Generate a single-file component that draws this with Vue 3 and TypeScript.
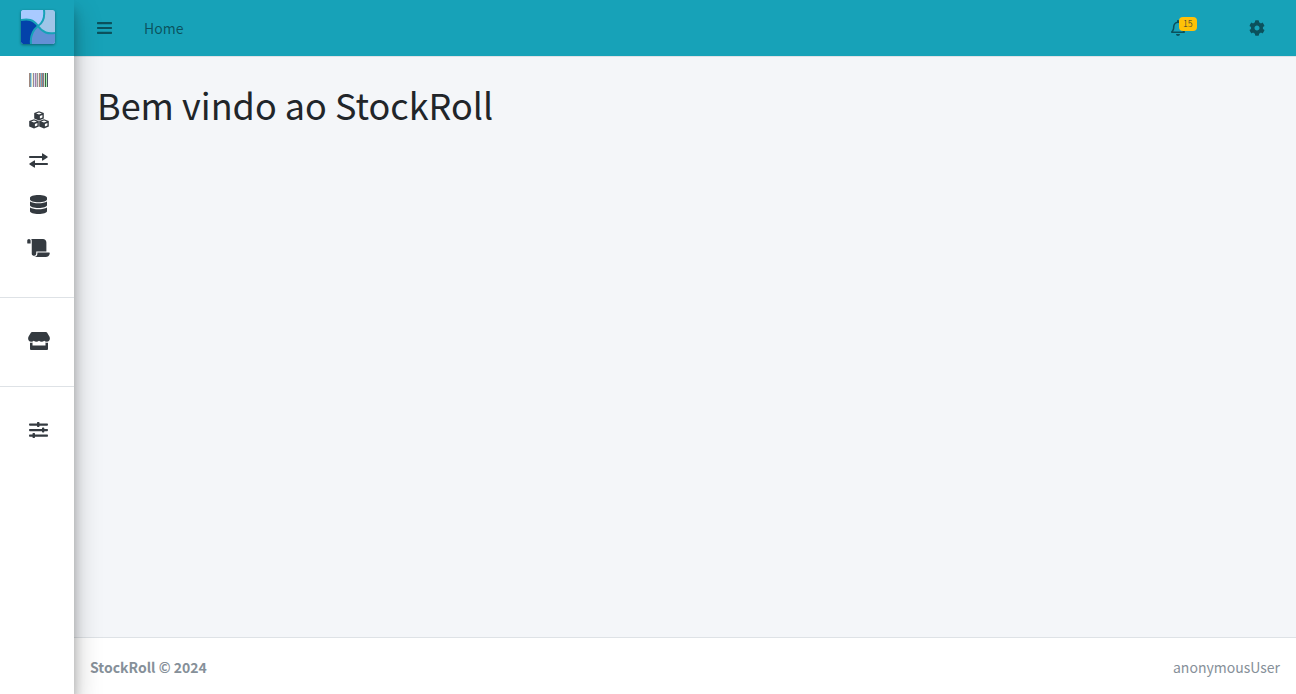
<script setup lang="ts">
interface Item {
  id: string
  label: string
}

const groups: Item[][] = [
  [
    { id: 'barcode', label: 'Produtos' },
    { id: 'cubes', label: 'Estoque' },
    { id: 'exchange', label: 'Movimentações' },
    { id: 'database', label: 'Cadastros' },
    { id: 'scroll', label: 'Relatórios' },
  ],
  [{ id: 'store', label: 'Loja' }],
  [{ id: 'sliders', label: 'Configurações' }],
]

const stripes = [
  '#a0887e', '#6f9bb0', '#a8dcf0', '#f6f2c8', '#8f8aa0', '#dcdff2', '#a083a8',
  '#d5c0d2', '#8fa09a', '#f0e6e0', '#a98078', '#7fb4c4', '#b58a86', '#6b8fa6',
  '#9a6f74', '#c8e4d8', '#35683c', '#b0f0b4', '#4a5568',
]
</script>

<template>
  <div class="layout">
    <aside class="sidebar">
      <a class="brand" href="#" aria-label="StockRoll">
        <svg class="logo" viewBox="0 0 34 34" aria-hidden="true">
          <defs><clipPath id="logoClip"><rect width="34" height="34" rx="2" /></clipPath></defs>
          <g clip-path="url(#logoClip)">
            <rect width="34" height="34" fill="#9fc5e8" />
            <path d="M0 0H23C24 8 22 13 17 16C12 9 7 9 0 10Z" fill="#a9caff" />
            <path d="M0 10C7 9 12 9 17 16C11 21 9 26 10 34H0Z" fill="#0342aa" />
            <path d="M10 34C9 26 11 21 17 16C22 23 27 24 34 23V34Z" fill="#6390d5" />
            <path d="M23 0C24 8 22 13 17 16C11 21 9 26 10 34M0 10C7 9 12 9 17 16C22 23 27 24 34 23" fill="none" stroke="#17a2b8" stroke-width="2" />
          </g>
        </svg>
      </a>
      <nav>
        <ul v-for="(group, g) in groups" :key="g" class="group">
          <li v-for="item in group" :key="item.id">
            <a href="#" :class="['side-link', item.id]" :aria-label="item.label">
              <svg v-if="item.id === 'barcode'" class="icon" width="19" height="14" viewBox="0 0 19 14" shape-rendering="crispEdges" aria-hidden="true">
                <rect v-for="(color, i) in stripes" :key="i" :x="i" y="0" width="1" height="14" :fill="color" />
              </svg>
              <svg v-else-if="item.id === 'cubes'" class="icon" width="20" height="18" viewBox="0 0 20 18" aria-hidden="true">
                <g v-for="p in [[5, 0], [0, 8], [10, 8]]" :key="p[0]" :transform="`translate(${p[0]} ${p[1]})`">
                  <path d="M5 .3L9.8 2V7.4L5 9.6.2 7.4V2Z" />
                  <path d="M5 1.4L7.9 2.5 5 3.6 2.1 2.5ZM5.9 5L8.4 4V6.4L5.9 7.6Z" fill="#fff" />
                </g>
              </svg>
              <svg v-else-if="item.id === 'exchange'" class="icon" width="19" height="15" viewBox="0 0 19 15" aria-hidden="true">
                <path d="M.8 3H13V.8Q13 0 13.8.4L18.5 3.6Q19 4 18.5 4.5L13.8 7.6Q13 8 13 7.1V5H.8Q0 5 0 4Q0 3 .8 3ZM18.2 10H6V7.8Q6 7 5.2 7.4L.5 10.6Q0 11 .5 11.5L5.2 14.6Q6 15 6 14.1V12H18.2Q19 12 19 11Q19 10 18.2 10Z" />
              </svg>
              <svg v-else-if="item.id === 'database'" class="icon" width="17" height="19" viewBox="0 0 448 512" preserveAspectRatio="none" aria-hidden="true">
                <path d="M448 73.143v45.714C448 159.143 347.667 192 224 192S0 159.143 0 118.857V73.143C0 32.857 100.333 0 224 0s224 32.857 224 73.143zM448 176v102.857C448 319.143 347.667 352 224 352S0 319.143 0 278.857V176c48.125 33.143 136.208 48.572 224 48.572S399.874 209.143 448 176zm0 160v102.857C448 479.143 347.667 512 224 512S0 479.143 0 438.857V336c48.125 33.143 136.208 48.572 224 48.572S399.874 369.143 448 336z" />
              </svg>
              <svg v-else-if="item.id === 'scroll'" class="icon" width="23" height="18" viewBox="0 0 640 512" aria-hidden="true">
                <path d="M48 0C21.53 0 0 21.53 0 48v64c0 8.84 7.16 16 16 16h80V48C96 21.53 74.47 0 48 0zm208 412.57V352h288V96c0-52.94-43.06-96-96-96H111.59C121.74 13.41 128 29.92 128 48v368c0 38.87 34.65 69.65 74.75 63.12C234.22 474 256 444.46 256 412.57zM288 384v32c0 52.93-43.06 96-96 96h336c61.86 0 112-50.14 112-112 0-8.84-7.16-16-16-16H288z" />
              </svg>
              <svg v-else-if="item.id === 'store'" class="icon" width="22" height="18" viewBox="0 0 22 18" aria-hidden="true">
                <path d="M4 0H18Q18.6 0 19 .6L21.4 4.5C22.6 6.8 21.5 9.8 18.8 9.8Q17.1 9.8 16.2 8.7Q15.2 9.8 13.6 9.8Q12 9.8 11 8.7Q10 9.8 8.4 9.8Q6.8 9.8 5.8 8.7Q4.9 9.8 3.2 9.8C.5 9.8-.6 6.8.6 4.5L3 .6Q3.4 0 4 0Z" />
                <path d="M2 10.7Q3.2 11 4.5 10.6V13.5H17.5V10.6Q18.8 11 20 10.7V17Q20 18 19 18H3Q2 18 2 17Z" />
              </svg>
              <svg v-else class="icon" width="19" height="16" viewBox="0 0 19 16" aria-hidden="true">
                <path d="M.7 1.5H8V.7Q8 0 8.7 0H9.8Q10.5 0 10.5.7V1.5H18.3Q19 1.5 19 2.6Q19 3.7 18.3 3.7H10.5V4.3Q10.5 5 9.8 5H8.7Q8 5 8 4.3V3.7H.7Q0 3.7 0 2.6Q0 1.5.7 1.5ZM.7 7H13V6.2Q13 5.5 13.7 5.5H14.6Q15.3 5.5 15.3 6.2V7H18.3Q19 7 19 8.1Q19 9.2 18.3 9.2H15.3V9.8Q15.3 10.5 14.6 10.5H13.7Q13 10.5 13 9.8V9.2H.7Q0 9.2 0 8.1Q0 7 .7 7ZM.7 12.6H3.5V11.7Q3.5 11 4.2 11H5.3Q6 11 6 11.7V12.6H18.3Q19 12.6 19 13.7Q19 14.8 18.3 14.8H6V15.3Q6 16 5.3 16H4.2Q3.5 16 3.5 15.3V14.8H.7Q0 14.8 0 13.7Q0 12.6.7 12.6Z" />
              </svg>
            </a>
          </li>
        </ul>
      </nav>
    </aside>

    <div class="main">
      <header class="navbar">
        <button type="button" class="nav-item" aria-label="Menu">
          <svg width="15" height="12" viewBox="0 0 15 12" aria-hidden="true">
            <path d="M.5 0H14.5L15 .5V1.8L14.5 2.3H.5L0 1.8V.5ZM.5 4.9H14.5L15 5.4V6.6L14.5 7.1H.5L0 6.6V5.4ZM.5 9.7H14.5L15 10.2V11.5L14.5 12H.5L0 11.5V10.2Z" />
          </svg>
        </button>
        <a href="#" class="nav-item">Home</a>
        <div class="nav-right">
          <button type="button" class="nav-item bell" aria-label="Notificações">
            <svg width="14" height="16" viewBox="0 0 448 512" aria-hidden="true">
              <path d="M439.39 362.29c-19.32-20.76-55.47-51.99-55.47-154.29 0-77.7-54.48-139.9-127.94-155.16V32c0-17.67-14.32-32-31.98-32s-31.98 14.33-31.98 32v20.84C118.56 68.1 64.08 130.3 64.08 208c0 102.3-36.15 133.53-55.47 154.29-6 6.45-8.66 14.16-8.61 21.71.11 16.4 12.98 32 32.1 32h383.8c19.12 0 32-15.6 32.1-32 .05-7.55-2.61-15.27-8.61-21.71zM67.53 368c21.22-27.97 44.42-74.33 44.53-159.42 0-.2-.06-.38-.06-.58 0-61.86 50.14-112 112-112s112 50.14 112 112c0 .2-.06.38-.06.58.11 85.1 23.31 131.46 44.53 159.42H67.53zM224 512c35.32 0 63.97-28.65 63.97-64H160.03c0 35.35 28.65 64 63.97 64z" />
            </svg>
            <span class="badge">15</span>
          </button>
          <button type="button" class="nav-item" aria-label="Opções">
            <svg width="16" height="16" viewBox="0 0 512 512" aria-hidden="true">
              <path d="M487.4 315.7l-42.6-24.6c4.3-23.2 4.3-47 0-70.2l42.6-24.6c4.9-2.8 7.1-8.6 5.5-14-11.1-35.6-30-67.8-54.7-94.6-3.8-4.1-10-5.1-14.8-2.3L380.8 110c-17.9-15.4-38.5-27.3-60.8-35.1V25.8c0-5.6-3.9-10.5-9.4-11.7-36.7-8.2-74.3-7.8-109.2 0-5.5 1.2-9.4 6.1-9.4 11.7V75c-22.2 7.9-42.8 19.8-60.8 35.1L88.7 85.5c-4.9-2.8-11-1.9-14.8 2.3-24.7 26.7-43.6 58.9-54.7 94.6-1.7 5.4.6 11.2 5.5 14L67.3 221c-4.3 23.2-4.3 47 0 70.2l-42.6 24.6c-4.9 2.8-7.1 8.6-5.5 14 11.1 35.6 30 67.8 54.7 94.6 3.8 4.1 10 5.1 14.8 2.3l42.6-24.6c17.9 15.4 38.5 27.3 60.8 35.1v49.2c0 5.6 3.9 10.5 9.4 11.7 36.7 8.2 74.3 7.8 109.2 0 5.5-1.2 9.4-6.1 9.4-11.7v-49.2c22.2-7.9 42.8-19.8 60.8-35.1l42.6 24.6c4.9 2.8 11 1.9 14.8-2.3 24.7-26.7 43.6-58.9 54.7-94.6 1.5-5.5-.7-11.3-5.6-14.1zM256 336c-44.1 0-80-35.9-80-80s35.9-80 80-80 80 35.9 80 80-35.9 80-80 80z" />
            </svg>
          </button>
        </div>
      </header>
      <main class="content">
        <h1>Bem vindo ao StockRoll</h1>
      </main>
      <footer class="footer">
        <strong>StockRoll © 2024</strong>
        <span>anonymousUser</span>
      </footer>
    </div>
  </div>
</template>

<style scoped>
.layout {
  display: flex;
  min-height: 100vh;
  font-family: "Noto Sans CJK JP", "Noto Sans", sans-serif;
  font-size: 14px;
  line-height: 24px;
  color: #212529;
  background: #f4f6f9;
}
.sidebar {
  position: relative;
  z-index: 1;
  flex: 0 0 74px;
  background: #fff;
  box-shadow: 0 14px 28px rgba(0, 0, 0, 0.25), 0 10px 10px rgba(0, 0, 0, 0.22);
}
.brand {
  display: flex;
  justify-content: center;
  height: 56px;
  padding: 10px 0 0 2px;
  box-sizing: border-box;
  background: #17a2b8;
}
.logo {
  width: 34px;
  height: 34px;
  border-radius: 2px;
  box-shadow: 0 1px 3px rgba(0, 0, 0, 0.4);
}
.group {
  list-style: none;
  margin: 0;
  padding: 31px 0 33px;
  border-bottom: 1px solid #dee2e6;
}
.group:first-child {
  padding: 4px 0 27px;
}
.group:last-child {
  border-bottom: 0;
}
.side-link {
  display: flex;
  align-items: center;
  justify-content: center;
  height: 24px;
  padding-left: 3px;
}
.group:first-child .side-link {
  height: 40px;
}
.group:first-child .database,
.group:first-child .scroll {
  height: 44px;
}
.group:first-child .database {
  margin-top: 2px;
}
.icon {
  display: block;
  fill: #343a40;
}
.main {
  flex: 1;
  min-width: 0;
  display: flex;
  flex-direction: column;
}
.navbar {
  display: flex;
  align-items: center;
  height: 57px;
  box-sizing: border-box;
  padding: 0 15px 0 7px;
  background: #17a2b8;
  border-bottom: 1px solid #dee2e6;
}
.nav-item {
  display: flex;
  align-items: center;
  height: 40px;
  padding: 0 16px;
  border: 0;
  background: none;
  font: inherit;
  color: rgba(0, 0, 0, 0.5);
  text-decoration: none;
}
.nav-item svg {
  fill: currentColor;
}
.nav-right {
  display: flex;
  margin-left: auto;
}
.bell {
  position: relative;
  width: 78px;
}
.badge {
  position: absolute;
  top: 9px;
  left: 24px;
  padding: 0 4px;
  border-radius: 4px;
  background: #ffc107;
  color: #1f2d3d;
  font-size: 9px;
  font-weight: 300;
  line-height: 14px;
}
.content {
  flex: 1;
  padding: 23px;
}
h1 {
  margin: 0;
  font-size: 36px;
  font-weight: 400;
  line-height: 48px;
}
.footer {
  display: flex;
  justify-content: space-between;
  padding: 17px 16px 15px;
  border-top: 1px solid #dee2e6;
  background: #fff;
  color: #869099;
}
</style>

<style>
body {
  margin: 0;
}
</style>
